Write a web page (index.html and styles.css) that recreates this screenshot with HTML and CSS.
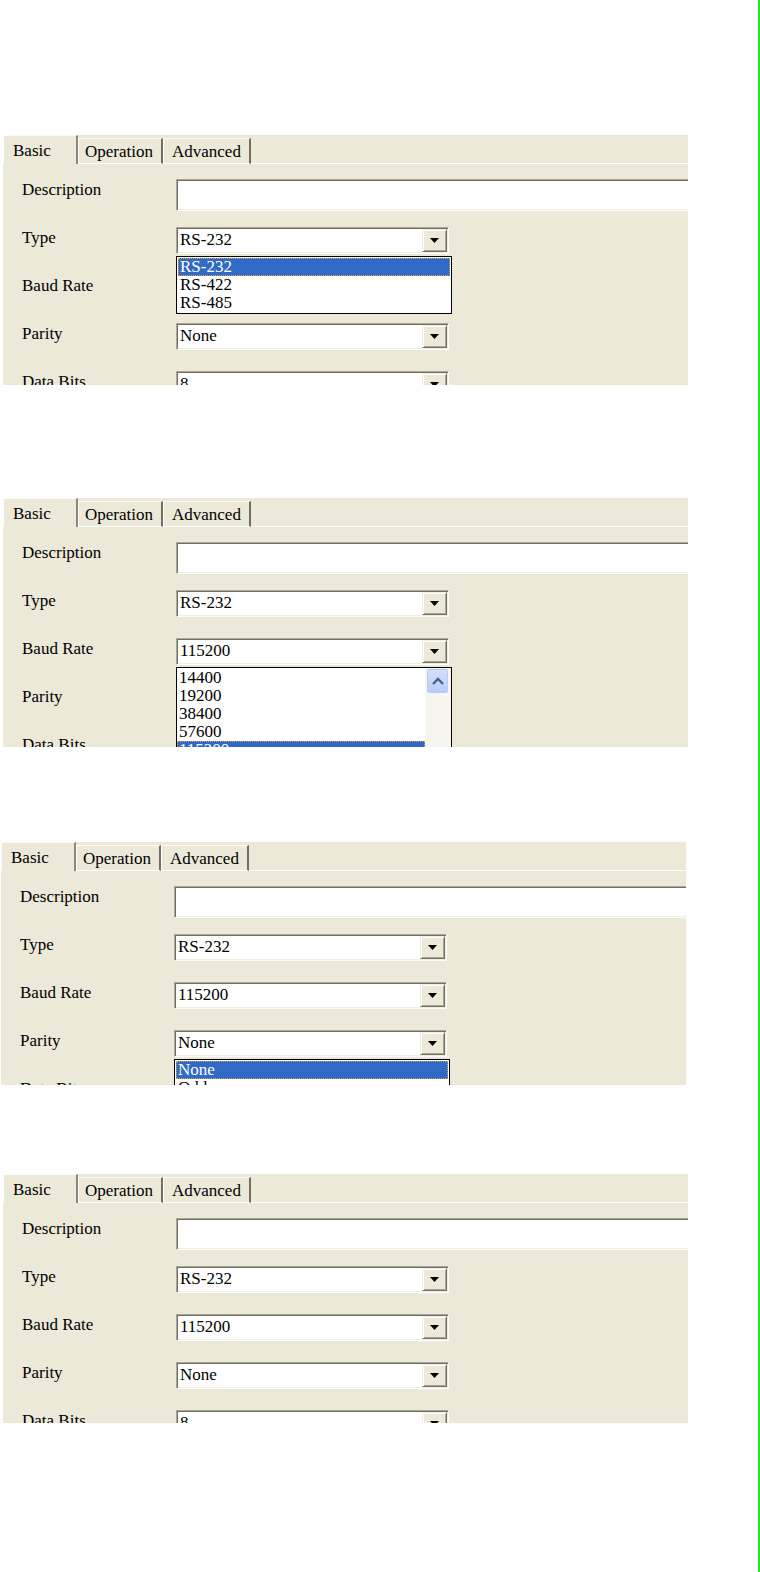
FILE: index.html
```html
<!DOCTYPE html>
<html lang="en">
  <head>
    <meta charset="UTF-8" />
    <title>Port Settings - Basic</title>
    <link rel="stylesheet" href="styles.css">
  </head>
  <body>
    <div class="page">

      <!-- Type list open -->
      <section class="dlg dlg-1">
        <div class="tabs">
          <div class="tab active">Basic</div>
          <div class="tab tab-op">Operation</div>
          <div class="tab tab-adv">Advanced</div>
          <div class="tab-rest"></div>
        </div>
        <div class="form">
          <div class="row">
            <div class="label">Description</div>
            <div class="textbox"></div>
          </div>
          <div class="row">
            <div class="label">Type</div>
            <div class="combo">
              <div class="combo-value">RS-232</div>
              <div class="combo-btn">
                <svg width="9" height="5" viewBox="0 0 9 5"><polygon points="0,0 9,0 4.5,5" fill="#000"/></svg>
              </div>
              <div class="dropdown">
                <div class="item selected">RS-232</div>
                <div class="item">RS-422</div>
                <div class="item">RS-485</div>
              </div>
            </div>
          </div>
          <div class="row">
            <div class="label">Baud Rate</div>
          </div>
          <div class="row">
            <div class="label">Parity</div>
            <div class="combo">
              <div class="combo-value">None</div>
              <div class="combo-btn">
                <svg width="9" height="5" viewBox="0 0 9 5"><polygon points="0,0 9,0 4.5,5" fill="#000"/></svg>
              </div>
            </div>
          </div>
          <div class="row">
            <div class="label">Data Bits</div>
            <div class="combo">
              <div class="combo-value">8</div>
              <div class="combo-btn">
                <svg width="9" height="5" viewBox="0 0 9 5"><polygon points="0,0 9,0 4.5,5" fill="#000"/></svg>
              </div>
            </div>
          </div>
        </div>
      </section>

      <!-- Baud rate list open -->
      <section class="dlg dlg-2">
        <div class="tabs">
          <div class="tab active">Basic</div>
          <div class="tab tab-op">Operation</div>
          <div class="tab tab-adv">Advanced</div>
          <div class="tab-rest"></div>
        </div>
        <div class="form">
          <div class="row">
            <div class="label">Description</div>
            <div class="textbox"></div>
          </div>
          <div class="row">
            <div class="label">Type</div>
            <div class="combo">
              <div class="combo-value">RS-232</div>
              <div class="combo-btn">
                <svg width="9" height="5" viewBox="0 0 9 5"><polygon points="0,0 9,0 4.5,5" fill="#000"/></svg>
              </div>
            </div>
          </div>
          <div class="row">
            <div class="label">Baud Rate</div>
            <div class="combo">
              <div class="combo-value">115200</div>
              <div class="combo-btn">
                <svg width="9" height="5" viewBox="0 0 9 5"><polygon points="0,0 9,0 4.5,5" fill="#000"/></svg>
              </div>
              <div class="dropdown scroll">
                <div class="items">
                  <div class="item">14400</div>
                  <div class="item">19200</div>
                  <div class="item">38400</div>
                  <div class="item">57600</div>
                  <div class="item selected">115200</div>
                </div>
                <div class="scrollbar">
                  <div class="scroll-up">
                    <svg width="14" height="10" viewBox="0 0 14 10"><path d="M2 8 L7 3 L12 8" fill="none" stroke="#4d6185" stroke-width="2.4"/></svg>
                  </div>
                </div>
              </div>
            </div>
          </div>
          <div class="row">
            <div class="label">Parity</div>
          </div>
          <div class="row">
            <div class="label">Data Bits</div>
          </div>
        </div>
      </section>

      <!-- Parity list open -->
      <section class="dlg dlg-3">
        <div class="tabs">
          <div class="tab active">Basic</div>
          <div class="tab tab-op">Operation</div>
          <div class="tab tab-adv">Advanced</div>
          <div class="tab-rest"></div>
        </div>
        <div class="form">
          <div class="row">
            <div class="label">Description</div>
            <div class="textbox"></div>
          </div>
          <div class="row">
            <div class="label">Type</div>
            <div class="combo">
              <div class="combo-value">RS-232</div>
              <div class="combo-btn">
                <svg width="9" height="5" viewBox="0 0 9 5"><polygon points="0,0 9,0 4.5,5" fill="#000"/></svg>
              </div>
            </div>
          </div>
          <div class="row">
            <div class="label">Baud Rate</div>
            <div class="combo">
              <div class="combo-value">115200</div>
              <div class="combo-btn">
                <svg width="9" height="5" viewBox="0 0 9 5"><polygon points="0,0 9,0 4.5,5" fill="#000"/></svg>
              </div>
            </div>
          </div>
          <div class="row">
            <div class="label">Parity</div>
            <div class="combo">
              <div class="combo-value">None</div>
              <div class="combo-btn">
                <svg width="9" height="5" viewBox="0 0 9 5"><polygon points="0,0 9,0 4.5,5" fill="#000"/></svg>
              </div>
              <div class="dropdown">
                <div class="item selected">None</div>
                <div class="item">Odd</div>
                <div class="item">Even</div>
              </div>
            </div>
          </div>
          <div class="row">
            <div class="label">Data Bits</div>
          </div>
        </div>
      </section>

      <!-- All closed -->
      <section class="dlg dlg-4">
        <div class="tabs">
          <div class="tab active">Basic</div>
          <div class="tab tab-op">Operation</div>
          <div class="tab tab-adv">Advanced</div>
          <div class="tab-rest"></div>
        </div>
        <div class="form">
          <div class="row">
            <div class="label">Description</div>
            <div class="textbox"></div>
          </div>
          <div class="row">
            <div class="label">Type</div>
            <div class="combo">
              <div class="combo-value">RS-232</div>
              <div class="combo-btn">
                <svg width="9" height="5" viewBox="0 0 9 5"><polygon points="0,0 9,0 4.5,5" fill="#000"/></svg>
              </div>
            </div>
          </div>
          <div class="row">
            <div class="label">Baud Rate</div>
            <div class="combo">
              <div class="combo-value">115200</div>
              <div class="combo-btn">
                <svg width="9" height="5" viewBox="0 0 9 5"><polygon points="0,0 9,0 4.5,5" fill="#000"/></svg>
              </div>
            </div>
          </div>
          <div class="row">
            <div class="label">Parity</div>
            <div class="combo">
              <div class="combo-value">None</div>
              <div class="combo-btn">
                <svg width="9" height="5" viewBox="0 0 9 5"><polygon points="0,0 9,0 4.5,5" fill="#000"/></svg>
              </div>
            </div>
          </div>
          <div class="row">
            <div class="label">Data Bits</div>
            <div class="combo">
              <div class="combo-value">8</div>
              <div class="combo-btn">
                <svg width="9" height="5" viewBox="0 0 9 5"><polygon points="0,0 9,0 4.5,5" fill="#000"/></svg>
              </div>
            </div>
          </div>
        </div>
      </section>

    </div>
  </body>
</html>
```

FILE: styles.css
```css
:root {
  --face: #ece9d8;
  --shadow: #aca899;
  --dark-shadow: #716f64;
  --light: #f1efe2;
  --select: #316ac5;
  --margin-line: #00ff00;
}

* {
  margin: 0;
  padding: 0;
  box-sizing: border-box;
}

body {
  background: #fff;
  color: #000;
  font-family: "Liberation Serif", "Times New Roman", serif;
  font-size: 17px;
  line-height: 18px;
}

.page {
  width: 760px;
  height: 1572px;
  border-right: 2px solid var(--margin-line);
  display: flex;
  flex-direction: column;
  align-items: flex-start;
}

/* Dialog panel */
.dlg {
  width: 685px;
  height: 249px;
  background: var(--face);
  overflow: hidden;
  flex-shrink: 0;
}

.dlg-1 {
  margin: 135px 0 0 3px;
  height: 250px;
}

.dlg-2 {
  margin: 113px 0 0 3px;
}

.dlg-3 {
  margin: 95px 0 0 1px;
  height: 243px;
}

.dlg-4 {
  margin: 89px 0 0 3px;
}

/* Tabs */
.tabs {
  display: flex;
  height: 29px;
}

.tab {
  height: 26px;
  margin-top: 3px;
  padding-top: 4px;
  border-top: 1px solid #fbfaf5;
  border-left: 1px solid #fff;
  border-right: 2px solid var(--dark-shadow);
  border-bottom: 1px solid #fff;
  white-space: nowrap;
}

.tab.active {
  width: 75px;
  height: 29px;
  margin-top: 0;
  padding: 6px 0 0 9px;
  border-bottom: none;
  border-right-color: #8a877b;
}

.tab-op {
  width: 85px;
  padding-left: 6px;
}

.tab-adv {
  width: 88px;
  padding-left: 8px;
}

.tab-rest {
  flex: 1;
  border-bottom: 1px solid #fff;
}

/* Form rows */
.form {
  display: flex;
  flex-direction: column;
  padding: 15px 0 0 19px;
}

.row {
  display: flex;
  height: 48px;
  flex-shrink: 0;
}

.label {
  width: 154px;
  flex-shrink: 0;
  padding-top: 2px;
}

.textbox {
  width: 540px;
  height: 32px;
  flex-shrink: 0;
  background: #fff;
  border: 1px solid;
  border-color: var(--shadow) #fff #fff var(--shadow);
  box-shadow: inset 1px 1px 0 var(--dark-shadow), inset -1px -1px 0 var(--light);
}

/* Combo box */
.combo {
  position: relative;
  width: 273px;
  height: 27px;
  flex-shrink: 0;
  display: flex;
  background: #fff;
  padding: 1px;
  border: 1px solid;
  border-color: var(--shadow) #fff #fff var(--shadow);
  box-shadow: inset 1px 1px 0 var(--dark-shadow), inset -1px -1px 0 var(--light);
}

.combo-value {
  flex: 1;
  padding: 2px 0 0 2px;
}

.combo-btn {
  width: 25px;
  display: flex;
  align-items: center;
  justify-content: center;
  background: var(--face);
  border: 1px solid;
  border-color: var(--light) var(--dark-shadow) var(--dark-shadow) var(--light);
  box-shadow: inset 1px 1px 0 #fff, inset -1px -1px 0 var(--shadow);
}

/* Open list */
.dropdown {
  position: absolute;
  top: calc(100% + 3px);
  left: -1px;
  width: 276px;
  background: #fff;
  border: 1px solid #000;
  padding: 1px;
}

.item {
  height: 18px;
  padding-left: 2px;
  white-space: nowrap;
}

.item.selected {
  background: var(--select);
  color: #fff;
  outline: 1px dotted #d6a24a;
  outline-offset: -1px;
}

.dropdown.scroll {
  display: flex;
  padding: 0;
  height: 110px;
}

.items {
  flex: 1;
  padding-top: 1px;
}

.scrollbar {
  width: 26px;
  background: #f6f5ef;
  padding: 1px 0 0 2px;
}

.scroll-up {
  width: 21px;
  height: 24px;
  display: flex;
  align-items: center;
  justify-content: center;
  border: 1px solid #b7cbf5;
  border-radius: 2px;
  background: linear-gradient(#d3e0fd, #b9cdfa);
}
```
